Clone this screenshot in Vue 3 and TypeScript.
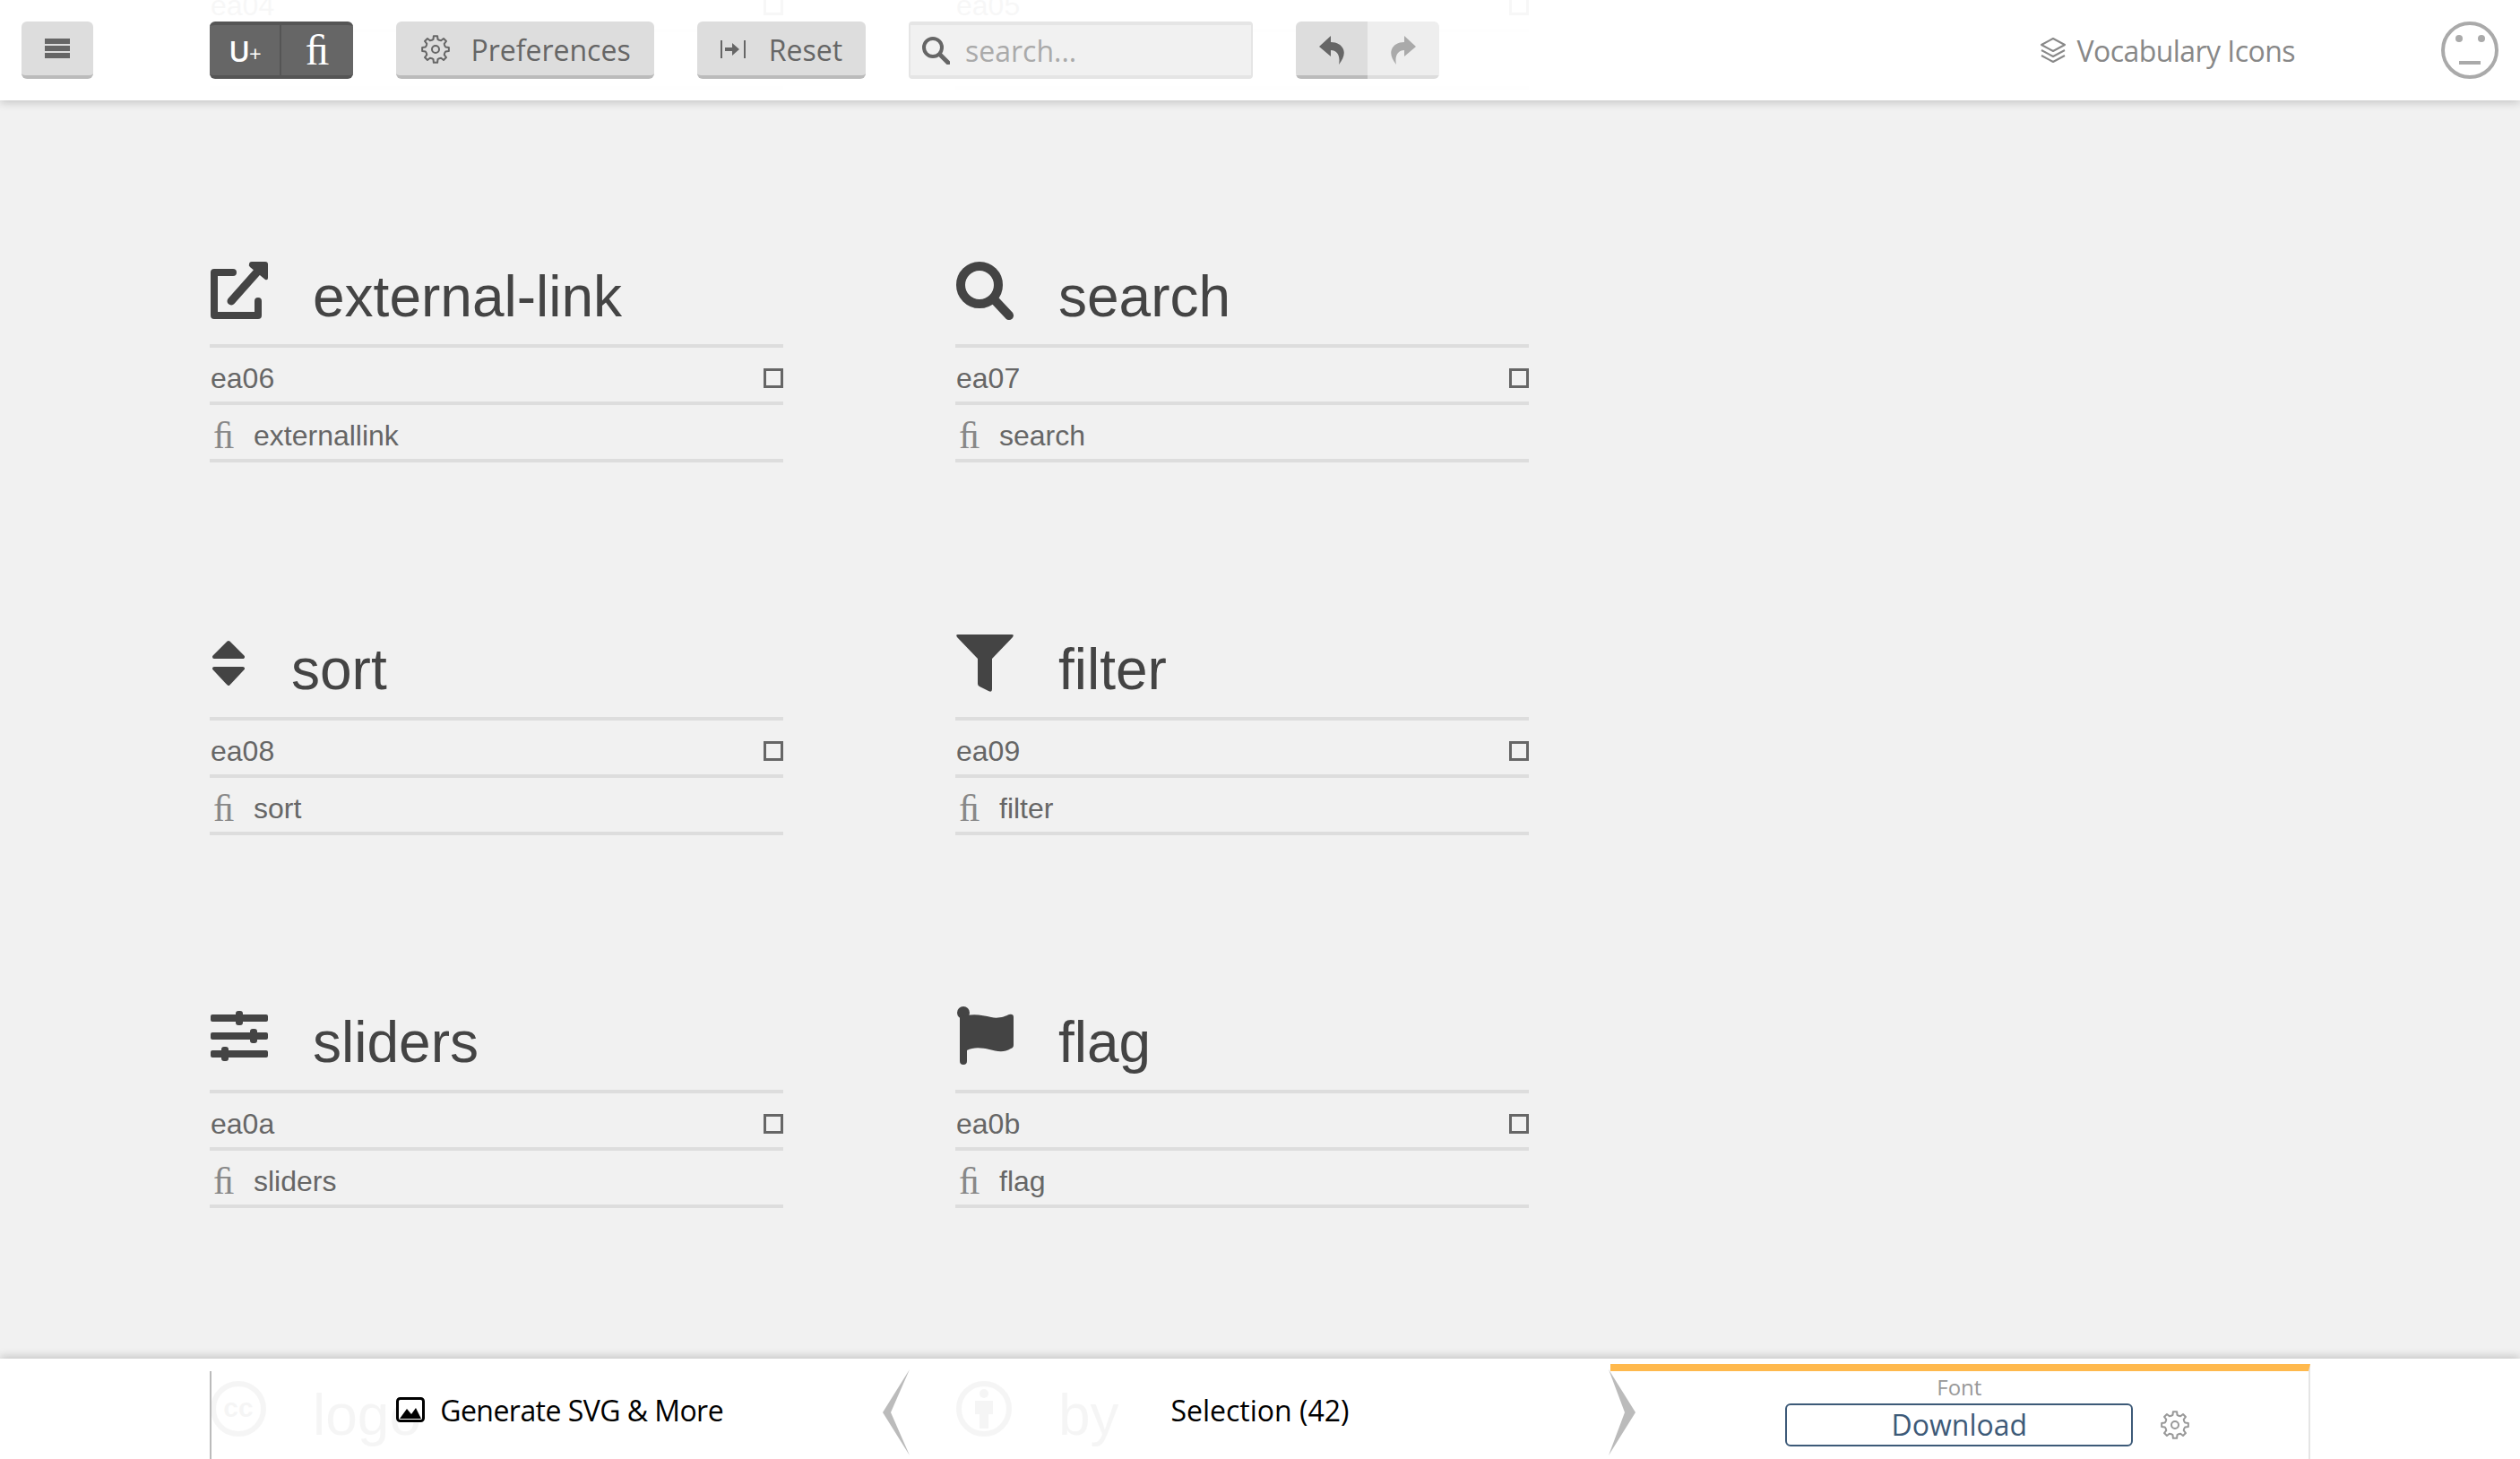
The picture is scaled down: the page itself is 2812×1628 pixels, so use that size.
<template>
  <div class="page">
    <!-- icon list, scrolled so that ea06 is the first full row -->
    <div class="grid">
      <div v-for="g in glyphs" :key="g.code" class="card">
        <div class="card-head">
          <div :class="['glyph', { narrow: g.icon === 'sort' }]">
            <svg v-if="g.icon === 'external-link'" viewBox="0 0 66 64" width="66" height="64">
              <path d="M26 12H5V60H54V44" fill="none" stroke="#444" stroke-width="8" stroke-linecap="round" stroke-linejoin="round" />
              <path d="M24 44L56 8" fill="none" stroke="#444" stroke-width="9" stroke-linecap="round" />
              <path d="M44 3Q44 0 47 0H62Q65 0 65 3V18Q65 21 62 20L45 6Q43 4 44 3Z" fill="#444" />
            </svg>
            <svg v-else-if="g.icon === 'search'" viewBox="0 0 64 64" width="64" height="64">
              <circle cx="27" cy="26" r="21" fill="none" stroke="#444" stroke-width="10" />
              <path d="M45 44L60 60" fill="none" stroke="#444" stroke-width="10" stroke-linecap="round" />
            </svg>
            <svg v-else-if="g.icon === 'sort'" viewBox="0 0 40 64" width="40" height="64">
              <path d="M21 9L37 25H5Z M21 55L37 38H5Z" fill="#444" stroke="#444" stroke-width="4" stroke-linejoin="round" />
            </svg>
            <svg v-else-if="g.icon === 'filter'" viewBox="0 0 66 64" width="66" height="64">
              <path d="M3 0H63Q66 0 64 3L41 27V61Q41 65 37 63L27 58Q25 57 25 55V27L2 3Q0 0 3 0Z" fill="#444" />
            </svg>
            <svg v-else-if="g.icon === 'sliders'" viewBox="0 0 66 64" width="66" height="64" fill="#444">
              <rect x="1" y="8" width="64" height="8" rx="2" />
              <rect x="1" y="28" width="64" height="8" rx="2" />
              <rect x="1" y="48" width="64" height="8" rx="2" />
              <rect x="29" y="4" width="8" height="16" rx="3" />
              <rect x="45" y="24" width="8" height="16" rx="3" />
              <rect x="13" y="44" width="8" height="16" rx="3" />
            </svg>
            <svg v-else-if="g.icon === 'flag'" viewBox="0 0 66 64" width="66" height="64" fill="#444">
              <circle cx="9" cy="6" r="7" />
              <path d="M13 9C22 7 32 9 40 11C48 13 56 10 60 8Q65 7 65 11V42Q65 45 62 46C54 51 46 49 38 47C30 45 20 44 13 48V60Q13 64 9 64Q5 64 5 60V10Z" />
            </svg>
            <svg v-else-if="g.icon === 'cc'" viewBox="0 0 64 64" width="64" height="64">
              <circle cx="32" cy="32" r="28" fill="none" stroke="#444" stroke-width="6" />
              <text x="32" y="41" text-anchor="middle" class="cc-text">cc</text>
            </svg>
            <svg v-else-if="g.icon === 'by'" viewBox="0 0 64 64" width="64" height="64" fill="#444">
              <circle cx="32" cy="32" r="28" fill="none" stroke="#444" stroke-width="6" />
              <circle cx="32" cy="15" r="5" />
              <path d="M22 23H42V38H37V54H27V38H22Z" />
            </svg>
          </div>
          <h1 class="card-title">{{ g.title }}</h1>
        </div>
        <div class="row">
          <span class="code">{{ g.code }}</span>
          <i class="check"></i>
        </div>
        <div class="row">
          <span class="fi">&#xfb01;</span>
          <span>{{ g.liga }}</span>
        </div>
      </div>
    </div>

    <header class="toolbar">
      <button type="button" class="btn menu-btn" aria-label="Menu">
        <span class="bars"><i></i><i></i><i></i></span>
      </button>

      <div class="btn-group dark">
        <button type="button" class="seg unicode">U<small>+</small></button>
        <button type="button" class="seg ligature">&#xfb01;</button>
      </div>

      <button type="button" class="btn pref-btn">
        <svg viewBox="0 0 32 32" width="32" height="32">
          <path :d="cogPath" fill="none" stroke="#666" stroke-width="2" stroke-linejoin="round" />
          <circle cx="16" cy="16" r="4" fill="none" stroke="#666" stroke-width="2" />
        </svg>
        Preferences
      </button>

      <button type="button" class="btn reset-btn">
        <svg viewBox="0 0 28 20" width="28" height="20" fill="#666">
          <rect x="0" y="0" width="2" height="20" />
          <rect x="26" y="0" width="2" height="20" />
          <path d="M5 8H13V3L21 10L13 17V12H5Z" />
        </svg>
        Reset
      </button>

      <label class="search">
        <svg viewBox="0 0 32 32" width="32" height="32">
          <circle cx="13" cy="13" r="10" fill="none" stroke="#666" stroke-width="4" />
          <path d="M21 21L30 30" fill="none" stroke="#666" stroke-width="5" stroke-linecap="round" />
        </svg>
        <input type="text" placeholder="search..." />
      </label>

      <div class="btn-group history">
        <button type="button" class="seg undo" aria-label="Undo">
          <svg viewBox="0 0 28 32" width="28" height="32">
            <path d="M13 0L0 12L13 23V16C20 16 24 22 22 32C27 26 29 20 27 15C25 10 20 7 13 7Z" fill="#666" />
          </svg>
        </button>
        <button type="button" class="seg redo" aria-label="Redo">
          <svg viewBox="0 0 28 32" width="28" height="32">
            <path d="M15 0L28 12L15 23V16C8 16 4 22 6 32C1 26 -1 20 1 15C3 10 8 7 15 7Z" fill="#aaa" />
          </svg>
        </button>
      </div>

      <div class="project">
        <svg viewBox="0 0 30 28" width="30" height="28" fill="none" stroke="#888" stroke-width="2" stroke-linejoin="round">
          <path d="M15 1L28 8L15 15L2 8Z" />
          <path d="M2 14L15 21L28 14" />
          <path d="M2 20L15 27L28 20" />
        </svg>
        <span>Vocabulary Icons</span>
      </div>

      <svg class="face" viewBox="0 0 64 64" width="64" height="64">
        <circle cx="32" cy="32" r="30" fill="none" stroke="#aaa" stroke-width="4" />
        <circle cx="20" cy="19" r="4" fill="#aaa" />
        <circle cx="45" cy="19" r="4" fill="#aaa" />
        <rect x="20" y="44" width="24" height="4" fill="#aaa" />
      </svg>
    </header>

    <footer class="footer">
      <div class="tabs">
        <div class="tab">
          <svg viewBox="0 0 32 28" width="32" height="28">
            <rect x="1.5" y="1.5" width="29" height="25" rx="3" fill="#fff" stroke="#000" stroke-width="3" />
            <path d="M4 24L12 13L17 19L22 12L28 24Z" fill="#000" />
          </svg>
          <span class="tab-generate">Generate SVG &amp; More</span>
          <svg class="chevron chevron-left" viewBox="0 0 30 96" width="30" height="96">
            <path d="M30 0L0 48L30 96L9 48Z" fill="#bbb" />
          </svg>
        </div>
        <div class="tab">
          <span>Selection ({{ selectedCount }})</span>
          <svg class="chevron chevron-right" viewBox="0 0 30 96" width="30" height="96">
            <path d="M0 0L30 48L0 96L18 48Z" fill="#bbb" />
          </svg>
        </div>
        <div class="tab tab-active">
          <div class="font-label">Font</div>
          <div class="font-actions">
            <button type="button" class="download">Download</button>
            <svg class="font-gear" viewBox="0 0 32 32" width="32" height="32">
              <path :d="cogPath" fill="none" stroke="#999" stroke-width="2" stroke-linejoin="round" />
              <circle cx="16" cy="16" r="4" fill="none" stroke="#999" stroke-width="2" />
            </svg>
          </div>
        </div>
      </div>
    </footer>
  </div>
</template>

<script setup lang="ts">
import { ref } from "vue";

interface Glyph {
  code: string;
  title: string;
  liga: string;
  icon: string;
}

const selectedCount = ref(42);

const glyphs: Glyph[] = [
  { code: "ea04", title: "link", liga: "link", icon: "" },
  { code: "ea05", title: "image", liga: "image", icon: "" },
  { code: "ea06", title: "external-link", liga: "externallink", icon: "external-link" },
  { code: "ea07", title: "search", liga: "search", icon: "search" },
  { code: "ea08", title: "sort", liga: "sort", icon: "sort" },
  { code: "ea09", title: "filter", liga: "filter", icon: "filter" },
  { code: "ea0a", title: "sliders", liga: "sliders", icon: "sliders" },
  { code: "ea0b", title: "flag", liga: "flag", icon: "flag" },
  { code: "ea0c", title: "logo", liga: "logo", icon: "cc" },
  { code: "ea0d", title: "by", liga: "by", icon: "by" },
];

// 8 tooth outline cog, 32 box
function buildCog(): string {
  const teeth = 8;
  const parts: string[] = [];
  for (let i = 0; i < teeth; i++) {
    const a = (i / teeth) * Math.PI * 2;
    const step = (Math.PI * 2) / teeth;
    const pts: [number, number][] = [
      [11, a - step * 0.5],
      [11.5, a - step * 0.28],
      [15, a - step * 0.18],
      [15, a + step * 0.18],
      [11.5, a + step * 0.28],
    ];
    for (const [r, t] of pts) {
      const x = (16 + r * Math.sin(t)).toFixed(2);
      const y = (16 - r * Math.cos(t)).toFixed(2);
      parts.push(`${parts.length ? "L" : "M"}${x} ${y}`);
    }
  }
  return parts.join("") + "Z";
}

const cogPath = buildCog();
</script>

<style scoped>
.page {
  position: relative;
  height: 1628px;
  overflow: hidden;
  background: #f1f1f1;
  font-family: "Liberation Sans", Arial, sans-serif;
}

.grid {
  display: grid;
  grid-template-columns: repeat(2, 640px);
  grid-auto-rows: 416px;
  column-gap: 192px;
  margin-top: -124px;
  padding-left: 234px;
}

.card-head {
  display: flex;
  align-items: flex-start;
  height: 92px;
  border-bottom: 4px solid #ddd;
}

.glyph {
  width: 64px;
  height: 64px;
  margin-right: 50px;
  flex-shrink: 0;
}

.glyph svg {
  display: block;
  overflow: visible;
}

.glyph.narrow {
  width: 40px;
}

.cc-text {
  font-family: "Liberation Sans", Arial, sans-serif;
  font-size: 30px;
  font-weight: 700;
  fill: #444;
}

.card-title {
  margin: 7px 0 0 1px;
  font-size: 64px;
  line-height: 64px;
  font-weight: 400;
  font-kerning: none;
  color: #444;
  white-space: nowrap;
}

.row {
  display: flex;
  align-items: flex-start;
  height: 54px;
  padding-top: 6px;
  border-bottom: 4px solid #ddd;
  font-size: 32px;
  line-height: 56px;
  color: #666;
}

.code {
  margin-left: 1px;
}

.check {
  width: 22px;
  height: 22px;
  margin: 17px 0 0 auto;
  box-sizing: border-box;
  border: 3px solid #666;
}

.fi {
  width: 24px;
  margin: 0 21px 0 4px;
  font-family: "Liberation Serif", "Times New Roman", serif;
  font-size: 42px;
  color: #888;
}

/* toolbar, translucent over the list */
.toolbar {
  position: absolute;
  top: 0;
  left: 0;
  right: 0;
  height: 112px;
  box-sizing: border-box;
  display: flex;
  align-items: flex-start;
  gap: 48px;
  padding: 24px 24px 0;
  background: rgba(255, 255, 255, 0.95);
  box-shadow: 0 2px 10px rgba(0, 0, 0, 0.2);
  font-family: "Open Sans", "Noto Sans", sans-serif;
}

.btn,
.seg {
  border: 0;
  padding: 0;
  margin: 0;
  font: inherit;
  cursor: pointer;
}

.btn {
  display: flex;
  align-items: center;
  justify-content: center;
  height: 64px;
  box-sizing: border-box;
  background: #ddd;
  border-bottom: 4px solid #bbb;
  border-radius: 6px;
  font-size: 32px;
  color: #666;
}

.menu-btn {
  width: 80px;
  margin-right: 82px;
}

.bars {
  display: flex;
  flex-direction: column;
  gap: 2px;
}

.bars i {
  display: block;
  width: 28px;
  height: 6px;
  background: #666;
}

.btn-group {
  display: flex;
  height: 64px;
  border-radius: 6px;
  overflow: hidden;
}

.dark {
  width: 160px;
  box-sizing: border-box;
  background: #666;
  border: solid #555;
  border-width: 4px 0;
}

.dark .seg {
  width: 80px;
  background: transparent;
  color: #fff;
}

.seg.unicode {
  font-size: 32px;
  font-weight: 600;
  letter-spacing: -1px;
  border-right: 2px solid #555;
  box-sizing: border-box;
}

.unicode small {
  font-size: 24px;
  font-weight: 400;
}

.seg.ligature {
  font-family: "Liberation Serif", serif;
  font-size: 48px;
  line-height: 48px;
}

.pref-btn {
  width: 288px;
  gap: 23px;
  padding-top: 2px;
  padding-left: 2px;
}

.reset-btn {
  width: 188px;
  gap: 26px;
  padding-top: 2px;
}

.search {
  display: flex;
  align-items: center;
  gap: 17px;
  width: 384px;
  height: 64px;
  box-sizing: border-box;
  padding-left: 12px;
  background: #f1f1f1;
  border: solid #e5e5e5;
  border-width: 4px 2px;
  border-radius: 4px;
}

.search input {
  flex: 1;
  min-width: 0;
  border: 0;
  outline: 0;
  padding: 0;
  background: transparent;
  font: inherit;
  font-size: 32px;
  color: #666;
}

.search input::placeholder {
  color: #aaa;
  opacity: 1;
}

.history .seg {
  display: flex;
  align-items: center;
  justify-content: center;
  height: 64px;
  box-sizing: border-box;
}

.undo {
  width: 80px;
  background: #ddd;
  border-bottom: 4px solid #bbb;
}

.redo {
  width: 80px;
  background: #eee;
  border-bottom: 4px solid #ddd;
}

.history .seg svg {
  margin-top: 4px;
}

.project {
  display: flex;
  align-items: center;
  gap: 11px;
  height: 64px;
  margin-left: auto;
  margin-right: 227px;
  font-size: 32px;
  letter-spacing: -0.55px;
  color: #888;
}

.face {
  position: absolute;
  top: 24px;
  right: 24px;
}

/* footer */
.footer {
  position: absolute;
  left: 0;
  right: 0;
  bottom: 0;
  height: 112px;
  box-sizing: border-box;
  padding: 6px 234px 0;
  background: rgba(255, 255, 255, 0.95);
  box-shadow: 0 -2px 10px rgba(0, 0, 0, 0.2);
  font-family: "Open Sans", "Noto Sans", sans-serif;
}

.tabs {
  display: grid;
  grid-template-columns: repeat(3, 1fr);
  height: 106px;
}

.tab {
  position: relative;
  display: flex;
  align-items: center;
  justify-content: center;
  gap: 17px;
  padding-bottom: 12px;
  box-sizing: border-box;
  border-top: 8px solid transparent;
  font-size: 32px;
  color: #000;
}

.tab-generate {
  letter-spacing: -0.55px;
}

.tab:first-child::before {
  content: "";
  position: absolute;
  left: 0;
  top: 0;
  bottom: 0;
  width: 2px;
  background: #bbb;
}

.tab-active {
  flex-direction: column;
  gap: 0;
  padding-bottom: 0;
  justify-content: flex-start;
  border-top-color: #ffb94d;
  border-right: 2px solid #e5e5e5;
}

.chevron {
  position: absolute;
  top: -2px;
}

.chevron-left {
  right: 0;
}

.chevron-right {
  right: -28px;
}

.font-label {
  height: 36px;
  font-size: 24px;
  line-height: 36px;
  color: #999;
}

.font-actions {
  display: grid;
  grid-template-columns: 1fr 388px 1fr;
  width: 100%;
  align-items: center;
}

.download {
  grid-column: 2;
  height: 48px;
  box-sizing: border-box;
  background: #fff;
  border: 2px solid #3d5a78;
  border-radius: 6px;
  font: inherit;
  font-size: 32px;
  line-height: 40px;
  color: #3d5a78;
  padding: 0;
}

.font-gear {
  margin-left: 31px;
}
</style>

<style>
html,
body {
  margin: 0;
  background: #f1f1f1;
}
</style>
